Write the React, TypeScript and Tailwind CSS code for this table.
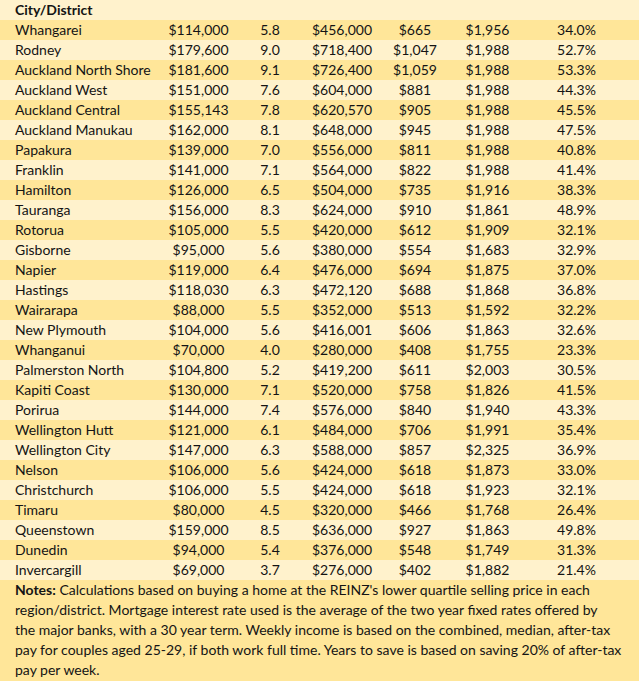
import React from 'react';

type Row = [string, string, string, string, string, string, string];

const rows: Row[] = [
  ['Whangarei', '$114,000', '5.8', '$456,000', '$665', '$1,956', '34.0%'],
  ['Rodney', '$179,600', '9.0', '$718,400', '$1,047', '$1,988', '52.7%'],
  ['Auckland North Shore', '$181,600', '9.1', '$726,400', '$1,059', '$1,988', '53.3%'],
  ['Auckland West', '$151,000', '7.6', '$604,000', '$881', '$1,988', '44.3%'],
  ['Auckland Central', '$155,143', '7.8', '$620,570', '$905', '$1,988', '45.5%'],
  ['Auckland Manukau', '$162,000', '8.1', '$648,000', '$945', '$1,988', '47.5%'],
  ['Papakura', '$139,000', '7.0', '$556,000', '$811', '$1,988', '40.8%'],
  ['Franklin', '$141,000', '7.1', '$564,000', '$822', '$1,988', '41.4%'],
  ['Hamilton', '$126,000', '6.5', '$504,000', '$735', '$1,916', '38.3%'],
  ['Tauranga', '$156,000', '8.3', '$624,000', '$910', '$1,861', '48.9%'],
  ['Rotorua', '$105,000', '5.5', '$420,000', '$612', '$1,909', '32.1%'],
  ['Gisborne', '$95,000', '5.6', '$380,000', '$554', '$1,683', '32.9%'],
  ['Napier', '$119,000', '6.4', '$476,000', '$694', '$1,875', '37.0%'],
  ['Hastings', '$118,030', '6.3', '$472,120', '$688', '$1,868', '36.8%'],
  ['Wairarapa', '$88,000', '5.5', '$352,000', '$513', '$1,592', '32.2%'],
  ['New Plymouth', '$104,000', '5.6', '$416,001', '$606', '$1,863', '32.6%'],
  ['Whanganui', '$70,000', '4.0', '$280,000', '$408', '$1,755', '23.3%'],
  ['Palmerston North', '$104,800', '5.2', '$419,200', '$611', '$2,003', '30.5%'],
  ['Kapiti Coast', '$130,000', '7.1', '$520,000', '$758', '$1,826', '41.5%'],
  ['Porirua', '$144,000', '7.4', '$576,000', '$840', '$1,940', '43.3%'],
  ['Wellington Hutt', '$121,000', '6.1', '$484,000', '$706', '$1,991', '35.4%'],
  ['Wellington City', '$147,000', '6.3', '$588,000', '$857', '$2,325', '36.9%'],
  ['Nelson', '$106,000', '5.6', '$424,000', '$618', '$1,873', '33.0%'],
  ['Christchurch', '$106,000', '5.5', '$424,000', '$618', '$1,923', '32.1%'],
  ['Timaru', '$80,000', '4.5', '$320,000', '$466', '$1,768', '26.4%'],
  ['Queenstown', '$159,000', '8.5', '$636,000', '$927', '$1,863', '49.8%'],
  ['Dunedin', '$94,000', '5.4', '$376,000', '$548', '$1,749', '31.3%'],
  ['Invercargill', '$69,000', '3.7', '$276,000', '$402', '$1,882', '21.4%'],
];

const grid = 'grid grid-cols-[160px_77px_66px_78px_68px_77px_101px_1fr] h-5 items-center';

export default function App() {
  return (
    <div className="w-[639px] h-[681px] bg-[#fff2cc] text-[#141414] text-[14px] leading-5 font-['Lato','Liberation_Sans',sans-serif] overflow-hidden">
      <div className={grid}>
        <div className="pl-[15px] font-bold whitespace-nowrap">City/District</div>
      </div>
      {rows.map((r, i) => (
        <div key={r[0]} className={`${grid} ${i % 2 === 0 ? 'bg-[#ffe699]' : 'bg-[#fff2cc]'}`}>
          <div className="pl-[15px] whitespace-nowrap">{r[0]}</div>
          {r.slice(1).map((v, j) => (
            <div key={j} className="text-center whitespace-nowrap">{v}</div>
          ))}
        </div>
      ))}
      <div className="bg-[#ffe699] h-[101px] pl-[15px] whitespace-nowrap">
        <p>
          <span className="font-bold">Notes:</span> Calculations based on buying a home at the REINZ's lower quartile selling price in each
          <br />
          region/district. Mortgage interest rate used is the average of the two year fixed rates offered by
          <br />
          the major banks, with a 30 year term. Weekly income is based on the combined, median, after-tax
          <br />
          pay for couples aged 25-29, if both work full time. Years to save is based on saving 20% of after-tax
          <br />
          pay per week.
        </p>
      </div>
    </div>
  );
}
